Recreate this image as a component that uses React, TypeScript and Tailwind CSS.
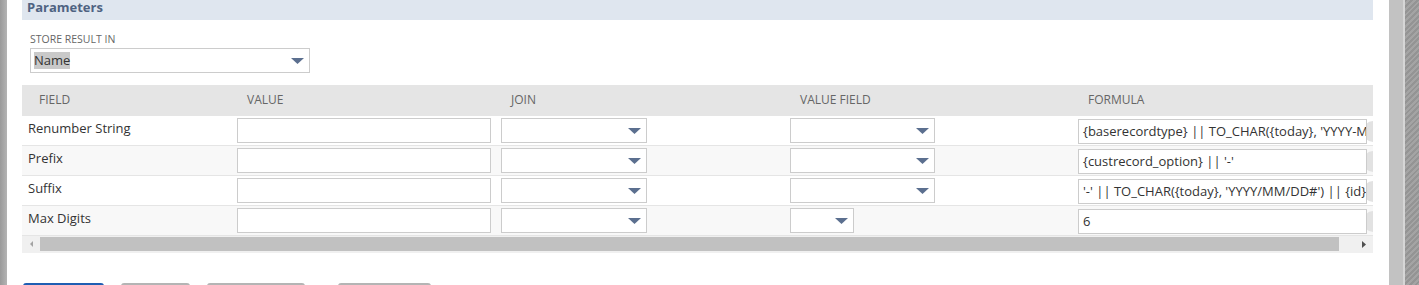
import React from "react";

type Row = { label: string; formula: string; shortValueField?: boolean };

const rows: Row[] = [
  { label: "Renumber String", formula: "{baserecordtype} || TO_CHAR({today}, 'YYYY-MM-DD') || {id}" },
  { label: "Prefix", formula: "{custrecord_option} || '-'" },
  { label: "Suffix", formula: "'-' || TO_CHAR({today}, 'YYYY/MM/DD#') || {id}" },
  { label: "Max Digits", formula: "6", shortValueField: true },
];

const cols = "grid grid-cols-[210px_264px_289px_288px_420px]";

function Arrow() {
  return (
    <svg width="13" height="6" viewBox="0 0 13 6" className="shrink-0">
      <polygon points="0,0 13,0 6.5,6" fill="#5b6f8f" />
    </svg>
  );
}

function Select({ width, children }: { width: string; children?: React.ReactNode }) {
  return (
    <div className={`flex h-[25px] ${width} items-center justify-between border border-[#cccccc] bg-white pl-[3px] pr-[5px]`}>
      <div className="flex items-center">{children}</div>
      <Arrow />
    </div>
  );
}

export default function App() {
  return (
    <div className="flex h-[285px] w-[1419px] overflow-hidden bg-white font-['Open_Sans',sans-serif] text-[#333]">
      <div className="w-[7px] shrink-0 bg-[linear-gradient(to_right,#9a9a9a,#b4b4b4)]" />

      <div className="w-[1382px] shrink-0 pl-[15px] pr-[16px]">
        <div className="h-[20px] bg-[#dfe6ef] pl-[5px] text-[13px] font-bold leading-[14px] text-[#4f6382]">
          Parameters
        </div>

        <div className="pl-[8px] pt-[12px]">
          <div className="text-[10.5px] leading-[15px] uppercase text-[#666]">Store Result In</div>
          <div className="mt-[1px]">
            <Select width="w-[280px]">
              <span className="bg-[#c9c9c9] text-[13px] leading-[17px] text-[#333]">Name</span>
            </Select>
          </div>
        </div>

        <div className="mt-[12px] overflow-hidden">
          <div className="w-max">
            <div className={`${cols} h-[30px] bg-[#e5e5e5] text-[12px] leading-[30px] uppercase text-[#666]`}>
              <div className="pl-[17px]">Field</div>
              <div className="pl-[15px]">Value</div>
              <div className="pl-[15px]">Join</div>
              <div className="pl-[15px]">Value Field</div>
              <div className="pl-[15px]">Formula</div>
            </div>

            {rows.map((row, i) => (
              <div
                key={row.label}
                className={`${cols} h-[30px] border-t border-[#e5e5e5] pt-[2px] ${i % 2 === 1 ? "bg-[#f8f8f8]" : "bg-white"}`}
              >
                <div className="pl-[6px] pt-[1px] text-[13px] leading-[18px]">{row.label}</div>
                <div className="pl-[5px]">
                  <div className="h-[25px] w-[254px] border border-[#cccccc] bg-white" />
                </div>
                <div className="pl-[5px]">
                  <Select width="w-[146px]" />
                </div>
                <div className="pl-[5px]">
                  <Select width={row.shortValueField ? "w-[64px]" : "w-[145px]"} />
                </div>
                <div className="flex items-center pl-[5px]">
                  <div className="relative z-10 h-[25px] w-[289px] overflow-hidden whitespace-nowrap border border-[#cccccc] bg-white pl-[4px] text-[13px] leading-[23px]">
                    {row.formula}
                  </div>
                  <div className="ml-[-4px] h-[21px] w-[21px] rounded-full bg-[#e2e2e2]" />
                </div>
              </div>
            ))}
          </div>

          <div className="flex h-[18px] items-start border-t border-[#e5e5e5] bg-[#f0f0f0] pt-[1px]">
            <div className="flex h-[14px] w-[18px] items-center justify-end pr-[7px]">
              <svg width="3" height="6" viewBox="0 0 3 6">
                <polygon points="3,0 3,6 0,3" fill="#a3a3a3" />
              </svg>
            </div>
            <div className="h-[14px] w-[1299px] bg-[#c1c1c1]" />
            <div className="flex h-[14px] flex-1 items-center justify-end pr-[7px]">
              <svg width="4" height="7" viewBox="0 0 4 7">
                <polygon points="0,0 4,3.5 0,7" fill="#505050" />
              </svg>
            </div>
          </div>
        </div>

        <div className="mt-[30px] flex pl-[1px]">
          <div className="h-[24px] w-[81px] rounded-[3px] bg-[#1f5eb3]" />
          <div className="ml-[17px] h-[24px] w-[69px] rounded-[3px] border-2 border-[#b4b4b4] bg-[#f0f0f0]" />
          <div className="ml-[17px] h-[24px] w-[98px] rounded-[3px] border-2 border-[#b4b4b4] bg-[#f0f0f0]" />
          <div className="ml-[33px] h-[24px] w-[93px] rounded-[3px] border-2 border-[#b4b4b4] bg-[#f0f0f0]" />
        </div>
      </div>

      <div className="w-[14px] shrink-0 bg-[#c2c2c2]" />
      <div className="w-[2px] shrink-0 bg-[#d6d6d6]" />
      <div className="flex-1 bg-[repeating-linear-gradient(135deg,#949494_0px,#949494_2px,#a4a4a4_2px,#a4a4a4_4px)]" />
    </div>
  );
}
